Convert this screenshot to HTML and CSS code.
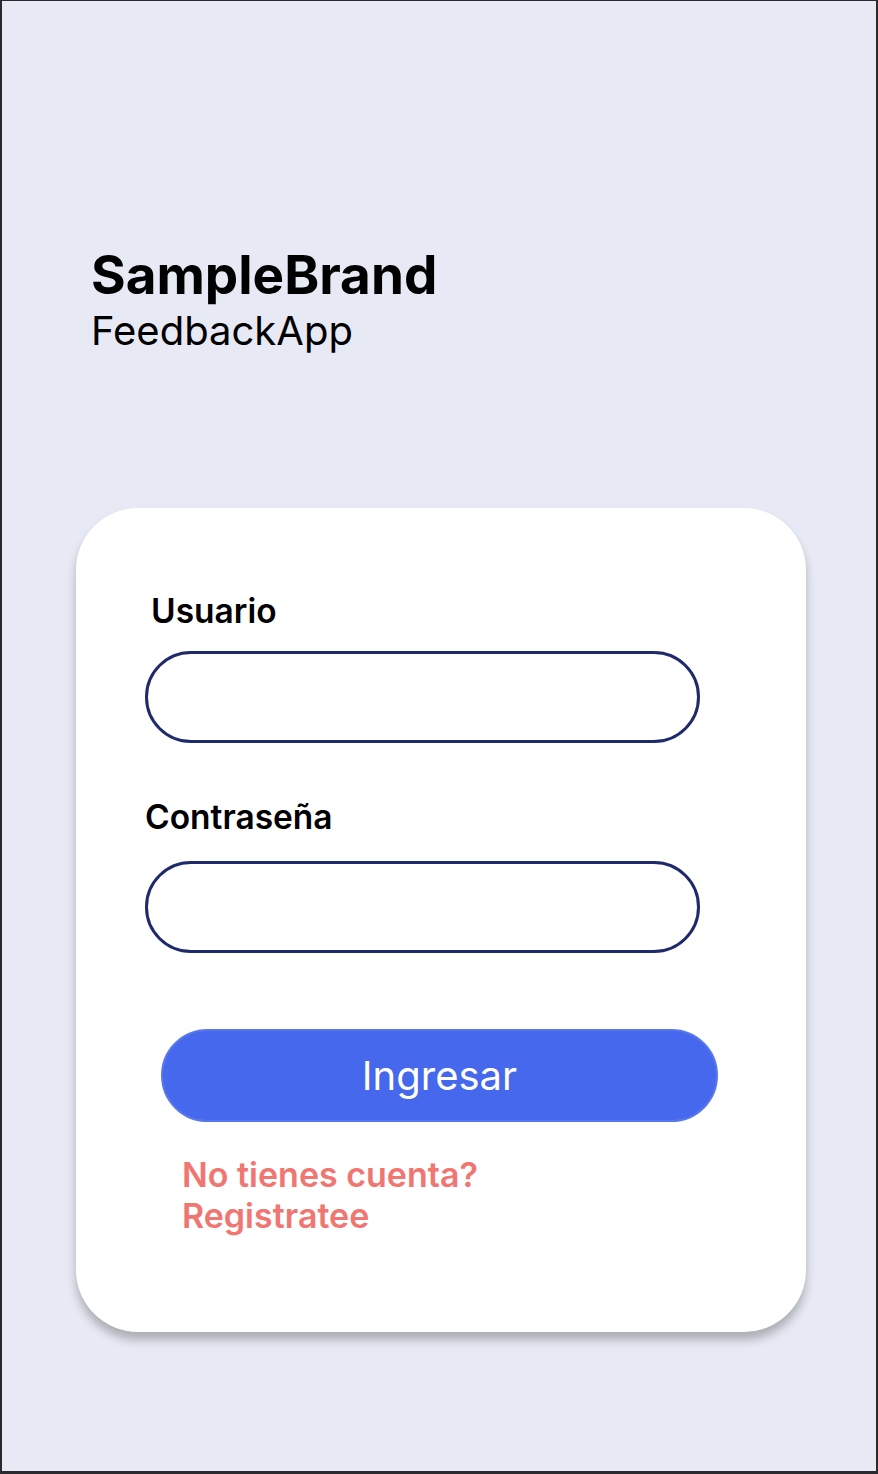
FILE: index.html
```html
<!DOCTYPE html>
<html lang="es">
<head>
<meta charset="utf-8">
<title>SampleBrand FeedbackApp</title>
<link rel="stylesheet" href="styles.css">
</head>
<body>
<div class="screen">
  <header class="brand">
    <h1 class="brand-name">SampleBrand</h1>
    <p class="brand-app">FeedbackApp</p>
  </header>
  <form class="card">
    <label class="label label-user" for="user">Usuario</label>
    <input class="field field-user" id="user" type="text">
    <label class="label label-pass" for="pass">Contraseña</label>
    <input class="field field-pass" id="pass" type="password">
    <button class="btn" type="button">Ingresar</button>
    <a class="register" href="#">No tienes cuenta?<br>Registratee</a>
  </form>
</div>
</body>
</html>
```
FILE: styles.css
```css
* { box-sizing: border-box; }
html, body { margin: 0; padding: 0; }
body {
  width: 878px;
  height: 1474px;
  font-family: Inter, "Noto Sans", sans-serif;
  background: #e7eaf4;
}
.screen {
  width: 878px;
  height: 1474px;
  border-style: solid;
  border-color: #2a2a2e;
  border-width: 1px 2px 3px 2px;
  background: #e7eaf4;
  padding: 244px 0 0 74px;
  display: flex;
  flex-direction: column;
}
.brand { padding-left: 15px; }
.brand-name {
  margin: 0;
  font-size: 53px;
  font-weight: 700;
  line-height: 60px;
  color: #000;
}
.brand-app {
  margin: 0;
  font-size: 40px;
  font-weight: 400;
  line-height: 52px;
  color: #000;
}
.card {
  margin-top: 151px;
  width: 730px;
  height: 824px;
  background: #fff;
  border-radius: 62px;
  box-shadow: 0 8px 10px rgba(0, 0, 0, 0.25);
  padding: 83px 0 0 69px;
  display: flex;
  flex-direction: column;
  align-items: flex-start;
}
.label {
  font-size: 33.5px;
  font-weight: 600;
  line-height: 40px;
  color: #000;
}
.label-user { margin-left: 6px; }
.label-pass { margin-top: 54px; }
.field {
  width: 555px;
  height: 92px;
  border: 3px solid #1f2a6b;
  border-radius: 46px;
  background: #fff;
  outline: none;
}
.field-user { margin-top: 20px; }
.field-pass { margin-top: 24px; }
.btn {
  margin-top: 76px;
  margin-left: 16px;
  width: 557px;
  height: 93px;
  border: 2px solid #5877ef;
  border-radius: 47px;
  background: #4668ec;
  color: #fff;
  font-family: Inter, "Noto Sans", sans-serif;
  font-size: 40px;
  font-weight: 400;
  padding: 0;
}
.register {
  margin-top: 32px;
  margin-left: 37px;
  font-size: 34px;
  font-weight: 600;
  line-height: 41px;
  color: #f07672;
  text-decoration: none;
}
```
